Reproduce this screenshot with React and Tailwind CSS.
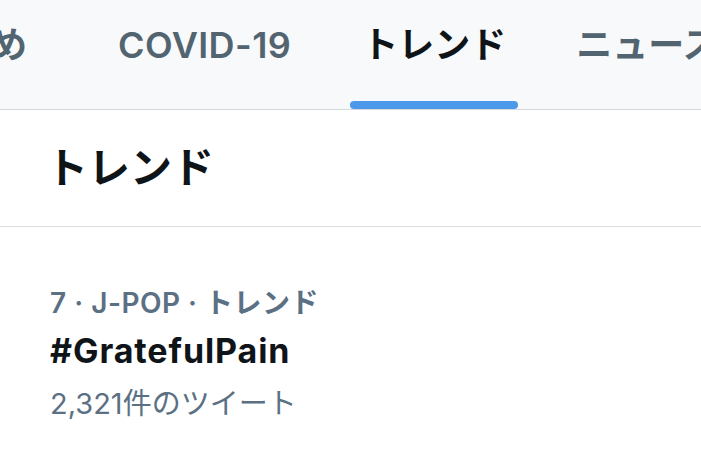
export default function App() {
  const font = { fontFamily: 'Inter, "Noto Sans CJK JP", sans-serif' };
  return (
    <div className="w-[701px] h-[459px] overflow-hidden bg-white" style={font}>
      <div className="h-[110px] bg-[#f8f9fa] border-b border-[#d3d9de] flex items-stretch overflow-hidden">
        <div className="flex items-stretch ml-[-135px] shrink-0">
          <div className="flex items-start pt-[18px] px-[18px] text-[36px] font-semibold text-[#536471] whitespace-nowrap">おすすめ</div>
          <div className="flex items-start pt-[18px] ml-[55px] px-[18px] text-[36px] font-semibold tracking-[0.4px] text-[#536471] whitespace-nowrap">COVID-19</div>
          <div className="flex flex-col items-center justify-between ml-[41px] whitespace-nowrap">
            <div className="pt-[18px] px-[12px] text-[36px] font-bold text-[#0f1419]">トレンド</div>
            <div className="h-[8px] w-full rounded-full bg-[#4b99e8]"></div>
          </div>
          <div className="flex items-start pt-[18px] ml-[40px] px-[18px] text-[36px] font-semibold text-[#536471] whitespace-nowrap">ニュース</div>
        </div>
      </div>
      <div className="h-[117px] border-b border-[#dcdfe2] flex items-center pl-[46px]">
        <h1 className="text-[42px] font-bold text-[#0f1419] leading-none">トレンド</h1>
      </div>
      <div className="pl-[50px] pt-[56px]">
        <div className="text-[28px] font-semibold tracking-[0.5px] text-[#5b7083] leading-[40px]">7 · J-POP · トレンド</div>
        <div className="text-[34px] font-bold tracking-[0.9px] text-[#0f1419] leading-[48px] mt-[4px]">#GratefulPain</div>
        <div className="text-[29px] text-[#5b7083] leading-[40px] mt-[9px]">2,321件のツイート</div>
      </div>
    </div>
  );
}
